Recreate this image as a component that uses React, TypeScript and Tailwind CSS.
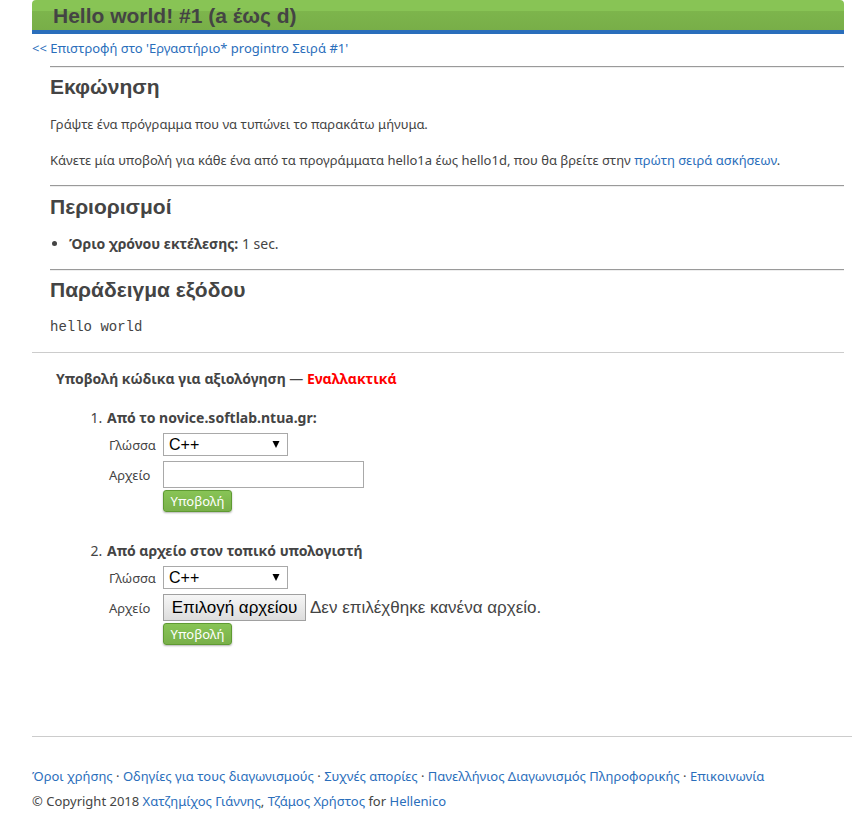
import { useId, useState } from 'react';
import type { ReactNode } from 'react';

const linkStyle = 'text-[#2a6ebb] hover:underline';
const headingStyle =
  "font-['Liberation_Sans',Arial,sans-serif] text-[21px] leading-[24px] font-bold";

function Link({ children }: { children: ReactNode }) {
  return (
    <a href="#" className={linkStyle}>
      {children}
    </a>
  );
}

function Rule() {
  return <hr className="h-[2px] border-t border-b border-t-[#9a9a9a] border-b-[#eeeeee]" />;
}

function LanguageSelect({ id }: { id: string }) {
  return (
    <div className="relative w-[125px]">
      <select
        id={id}
        defaultValue="C++"
        className="block h-[23px] w-full appearance-none border border-[#a9a9a9] bg-white pl-[5px] font-['Liberation_Sans',Arial,sans-serif] text-[16px] leading-[20px] text-black"
      >
        <option>C++</option>
        <option>C</option>
        <option>Pascal</option>
        <option>Java</option>
      </select>
      <svg
        viewBox="0 0 8 7"
        className="pointer-events-none absolute top-[8px] right-[8px] h-[7px] w-[8px]"
        aria-hidden="true"
      >
        <path d="M0.5 0h7L4 7z" fill="#000" />
      </svg>
    </div>
  );
}

function FileChooser({ id }: { id: string }) {
  const [name, setName] = useState('');
  return (
    <div className="flex items-center gap-1 font-['Liberation_Sans',Arial,sans-serif] text-[17px]">
      <input
        id={id}
        type="file"
        className="peer sr-only"
        onChange={(e) => setName(e.target.files?.[0]?.name ?? '')}
      />
      <label
        htmlFor={id}
        className="flex h-[27px] w-[143px] items-center justify-center border border-[#a0a0a0] bg-linear-to-b from-[#f6f6f6] to-[#dddddd] whitespace-nowrap text-black peer-focus-visible:outline-2"
      >
        Επιλογή αρχείου
      </label>
      <span>{name || 'Δεν επιλέχθηκε κανένα αρχείο.'}</span>
    </div>
  );
}

function Submission({ title, upload }: { title: string; upload?: boolean }) {
  const id = useId();
  return (
    <li className="pl-px">
      <strong className="block">{title}</strong>
      <form
        className="mt-[6px] grid grid-cols-[54px_1fr] items-center pl-[2px] text-[13px] leading-[18px]"
        onSubmit={(e) => e.preventDefault()}
      >
        <label htmlFor={`${id}-language`}>Γλώσσα</label>
        <LanguageSelect id={`${id}-language`} />
        <label htmlFor={`${id}-file`} className="mt-[5px]">
          Αρχείο
        </label>
        <div className="mt-[5px]">
          {upload ? (
            <FileChooser id={`${id}-file`} />
          ) : (
            <input
              id={`${id}-file`}
              type="text"
              className="block h-[27px] w-[201px] border border-[#a9a9a9] bg-white px-1"
            />
          )}
        </div>
        <button
          type="submit"
          className="col-start-2 mt-[2px] flex h-[22px] w-[69px] items-center justify-center rounded-[3px] border border-[#5f9a32] bg-linear-to-b from-[#88c455] to-[#79b04a] text-white shadow-[0_1px_2px_rgba(0,0,0,0.3)]"
        >
          Υποβολή
        </button>
      </form>
    </li>
  );
}

export default function App() {
  return (
    <div className="min-h-screen bg-white pl-8 font-['Noto_Sans',Tahoma,sans-serif] text-[13px] leading-[18px] text-[#444444]">
      <div className="pr-2">
        <header className="rounded-t-[4px] border-b-4 border-[#2a6ebb] bg-[linear-gradient(to_bottom,#88c455_0px,#88c455_11px,#7db54c_11px,#78ae48_30px)] pt-1 pb-[2px] pl-[21px]">
          <h1 className={headingStyle}>Hello world! #1 (a έως d)</h1>
        </header>

        <nav className="mt-[5px]">
          <Link>&lt;&lt; Επιστροφή στο 'Εργαστήριο* progintro Σειρά #1'</Link>
        </nav>

        <main>
          <div className="pt-[9px] pl-[18px]">
            <Rule />
            <section className="pt-[7px] pb-4">
              <h2 className={headingStyle}>Εκφώνηση</h2>
              <p className="mt-4">Γράψτε ένα πρόγραμμα που να τυπώνει το παρακάτω μήνυμα.</p>
              <p className="mt-[18px]">
                Κάνετε μία υποβολή για κάθε ένα από τα προγράμματα hello1a έως hello1d, που θα
                βρείτε στην <Link>πρώτη σειρά ασκήσεων</Link>.
              </p>
            </section>
            <Rule />
            <section className="pt-2 pb-4">
              <h2 className={headingStyle}>Περιορισμοί</h2>
              <ul className="mt-4 list-disc pl-[19px] text-[14px]">
                <li>
                  <strong>Όριο χρόνου εκτέλεσης:</strong> 1 sec.
                </li>
              </ul>
            </section>
            <Rule />
            <section className="pt-[7px] pb-4">
              <h2 className={headingStyle}>Παράδειγμα εξόδου</h2>
              <pre className="mt-4 font-['Liberation_Mono','Courier_New',monospace] text-[14px]">
                hello world
              </pre>
            </section>
          </div>

          <section className="border-t border-[#cccccc] pt-[17px] pl-6 text-[14px] leading-[18px]">
            <p>
              <strong>Υποβολή κώδικα για αξιολόγηση</strong> —{' '}
              <strong className="text-[#ff0000]">Εναλλακτικά</strong>
            </p>
            <ol className="mt-[21px] flex list-decimal flex-col gap-[30px] pl-[50px]">
              <Submission title="Από το novice.softlab.ntua.gr:" />
              <Submission title="Από αρχείο στον τοπικό υπολογιστή" upload />
            </ol>
          </section>
        </main>
      </div>

      <footer className="mt-[91px] border-t border-[#cccccc] pt-[27px] leading-[25px]">
        <p>
          <Link>Όροι χρήσης</Link> · <Link>Οδηγίες για τους διαγωνισμούς</Link> ·{' '}
          <Link>Συχνές απορίες</Link> · <Link>Πανελλήνιος Διαγωνισμός Πληροφορικής</Link> ·{' '}
          <Link>Επικοινωνία</Link>
        </p>
        <p>
          © Copyright 2018 <Link>Χατζημίχος Γιάννης</Link>, <Link>Τζάμος Χρήστος</Link> for{' '}
          <Link>Hellenico</Link>
        </p>
      </footer>
    </div>
  );
}
